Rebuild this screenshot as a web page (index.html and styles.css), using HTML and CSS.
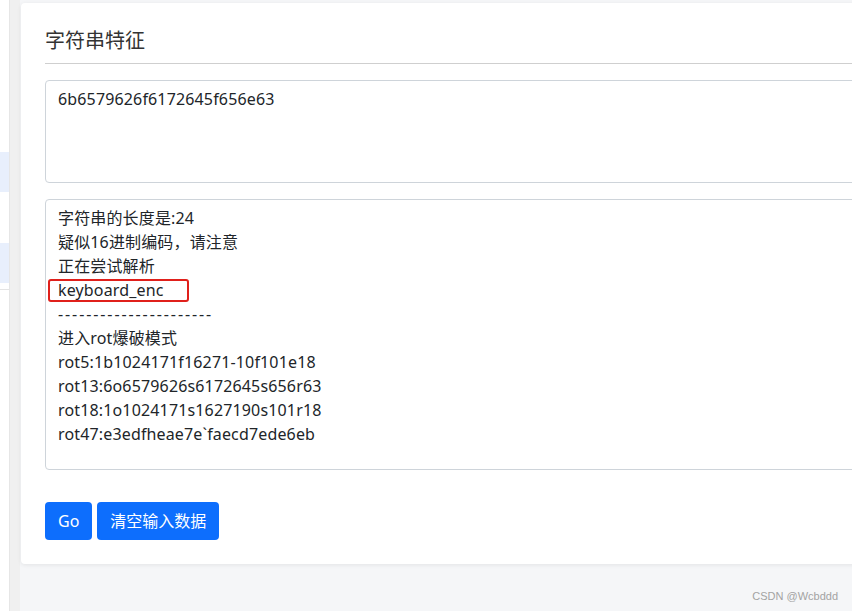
FILE: index.html
```html
<!DOCTYPE html>
<html lang="zh-CN">
<head>
  <meta charset="UTF-8" />
  <title>字符串特征</title>
  <link rel="stylesheet" href="styles.css">
</head>
<body>

  <aside class="sidebar">
    <div class="nav-item active"></div>
    <div class="nav-item gap"></div>
    <div class="nav-item active"></div>
    <div class="nav-item last"></div>
  </aside>
  <div class="sidebar-edge"></div>

  <main class="main">
    <div class="card">
      <h2 class="card-title">字符串特征</h2>
      <hr class="divider">

      <textarea class="field field-input" id="input">6b6579626f6172645f656e63</textarea>

      <div class="result-wrap">
        <div class="field field-output" id="output">字符串的长度是:24
疑似16进制编码，请注意
正在尝试解析
keyboard_enc
<span class="rule">----------------------</span>
进入rot爆破模式
rot5:1b1024171f16271-10f101e18
rot13:6o6579626s6172645s656r63
rot18:1o1024171s1627190s101r18
rot47:e3edfheae7e`faecd7ede6eb</div>
        <!-- highlight on the decoded line -->
        <span class="mark"></span>
      </div>

      <div class="actions">
        <button class="btn" onclick="go()">Go</button>
        <button class="btn" onclick="clearInput()">清空输入数据</button>
      </div>
    </div>

    <p class="watermark">CSDN @Wcbddd</p>
  </main>

  <script>
    function go() {
    }

    function clearInput() {
      document.getElementById('input').value = '';
    }
  </script>

</body>
</html>
```

FILE: styles.css
```css
* {
  box-sizing: border-box;
  margin: 0;
  padding: 0;
}

body {
  display: flex;
  height: 611px;
  overflow: hidden;
  font-family: "Noto Sans", "Noto Sans CJK SC", sans-serif;
  background: #f5f6f8;
  color: #212529;
}

/* collapsed side menu */
.sidebar {
  width: 9px;
  background: #ffffff;
  padding-top: 152px;
}

.nav-item {
  height: 40px;
}

.nav-item.active {
  background: #e8effc;
}

.nav-item.gap {
  height: 51px;
}

.nav-item.last {
  height: 7px;
  border-bottom: 1px solid #e4e4e4;
}

.sidebar-edge {
  width: 11px;
  background: #f0f0f0;
  border-left: 1px solid #e6e6e6;
}

.main {
  flex: 1;
  min-width: 0;
  padding: 3px 14px 0 1px;
}

.card {
  margin-right: -60px;
  background: #ffffff;
  padding: 24px;
  border-radius: 4px;
  box-shadow: 0 1px 4px rgba(0, 0, 0, 0.08);
}

.card-title {
  font-family: "Noto Sans CJK SC", sans-serif;
  font-size: 20px;
  font-weight: 400;
  line-height: 26px;
  color: #333;
}

.divider {
  border: none;
  border-top: 1px solid #cfcfcf;
  margin: 10px 0 16px;
}

.field {
  display: block;
  width: 100%;
  padding: 6px 12px;
  font-family: "Noto Sans", "Noto Sans CJK SC", sans-serif;
  font-size: 16px;
  line-height: 24px;
  letter-spacing: 0.15px;
  color: #212529;
  background: #ffffff;
  border: 1px solid #ced4da;
  border-radius: 4px;
  resize: none;
  outline: none;
  overflow: hidden;
}

.field-input {
  height: 103px;
}

.result-wrap {
  position: relative;
  margin-top: 16px;
}

.field-output {
  height: 271px;
  white-space: pre-wrap;
}

.rule {
  letter-spacing: 1.9px;
}

.mark {
  position: absolute;
  left: 3px;
  top: 80px;
  width: 141px;
  height: 23px;
  border: 2px solid #e0201b;
  border-radius: 3px;
}

.actions {
  display: flex;
  gap: 5px;
  margin-top: 32px;
}

.btn {
  background: #0d6efd;
  color: #ffffff;
  border: none;
  border-radius: 4px;
  padding: 7px 13px;
  font-family: "Noto Sans", "Noto Sans CJK SC", sans-serif;
  font-size: 16px;
  line-height: 24px;
  cursor: pointer;
}

.watermark {
  margin-top: 26px;
  text-align: right;
  font-family: "Liberation Sans", sans-serif;
  font-size: 11px;
  color: #a3a3a3;
}
```
